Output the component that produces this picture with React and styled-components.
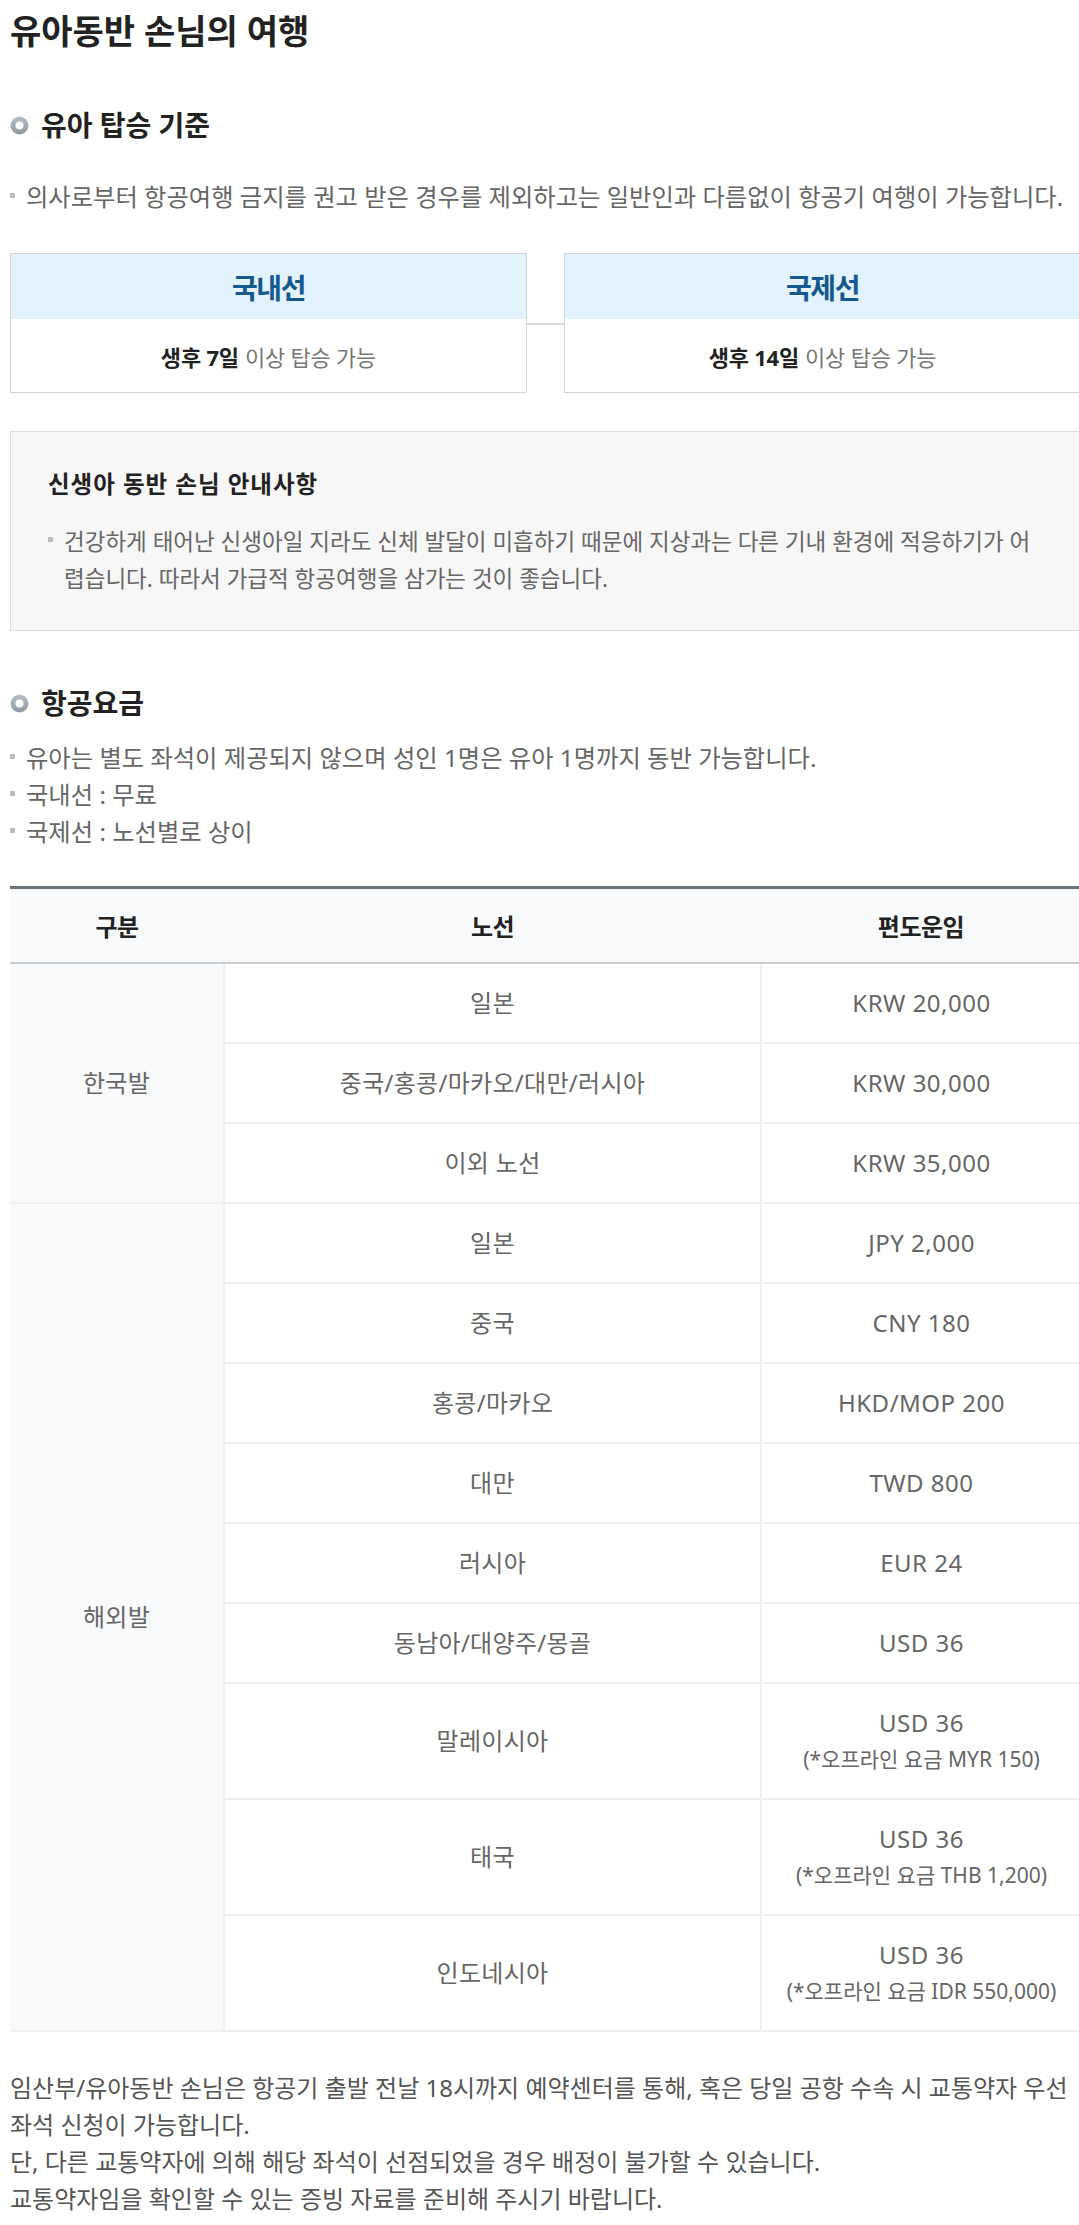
import React from 'react';
import styled, { createGlobalStyle } from 'styled-components';

const GlobalStyle = createGlobalStyle`
  html, body {
    margin: 0;
    padding: 0;
    background: #fff;
    overflow-x: hidden;
  }
  body {
    font-family: "Noto Sans", "Noto Sans CJK KR", sans-serif;
    color: #666;
  }
  * {
    box-sizing: border-box;
  }
`;

const Page = styled.div`
  width: 1081px;
  padding: 8px 0 40px 10px;
`;

const PageTitle = styled.h1`
  margin: 0;
  font-size: 34px;
  line-height: 46px;
  font-weight: 700;
  color: #222;
`;

const SectionTitle = styled.h2`
  display: flex;
  align-items: center;
  gap: 12px;
  margin: ${props => props.$top || 51}px 0 0;
  font-size: 28px;
  line-height: 40px;
  font-weight: 700;
  color: #222;
`;

const BulletList = styled.ul`
  list-style: none;
  margin: ${props => props.$top || 0}px 0 0;
  padding: 0;
`;

const Bullet = styled.li`
  padding-left: 16px;
  text-indent: -16px;
  font-size: ${props => props.$size || 24.3}px;
  line-height: ${props => props.$lh || 36}px;
  color: #666;
  word-break: ${props => (props.$breakAll ? 'break-all' : 'keep-all')};

  &::before {
    content: '';
    display: inline-block;
    width: 5px;
    height: 5px;
    margin-right: 11px;
    vertical-align: middle;
    position: relative;
    top: -4px;
    background: #b9bec3;
  }
`;

const CardRow = styled.div`
  display: grid;
  grid-template-columns: 517px 37px 1fr;
  margin-top: 38px;
`;

const Card = styled.div`
  border: 1px solid #cdd4da;
  background: #fff;
`;

const CardHead = styled.div`
  height: 65px;
  display: flex;
  align-items: center;
  justify-content: center;
  background: #e2f3fd;
  font-size: 28px;
  font-weight: 700;
  letter-spacing: -1.5px;
  color: #15598c;
`;

const CardBody = styled.div`
  height: 73px;
  display: flex;
  align-items: center;
  justify-content: center;
  font-size: 22px;
  color: #777;
  letter-spacing: -0.2px;

  strong {
    color: #222;
    font-weight: 700;
    margin-right: 6px;
  }
`;

const Connector = styled.div`
  align-self: start;
  margin-top: 70px;
  height: 2px;
  background: #d5d9dd;
`;

const Notice = styled.div`
  margin-top: 38px;
  border: 1px solid #dedede;
  background: #f7f7f7;
  padding: 34px 40px 33px 37px;
`;

const NoticeTitle = styled.h3`
  margin: 0 0 21px;
  font-size: 23.5px;
  line-height: 36px;
  font-weight: 700;
  letter-spacing: 1px;
  color: #222;
`;

const Table = styled.table`
  width: 100%;
  margin-top: 36px;
  border-collapse: collapse;
  border-top: 3px solid #69737c;
  border-bottom: 2px solid #c9ced4;
  table-layout: fixed;
`;

const Th = styled.th`
  height: 75px;
  padding: 0;
  background: #f8f9fb;
  border-bottom: 2px solid #c9ced4;
  font-size: 24px;
  font-weight: 700;
  letter-spacing: -0.5px;
  color: #222;
  text-align: center;
`;

const Td = styled.td`
  padding: 21px 8px;
  text-align: center;
  font-size: 24px;
  line-height: 36px;
  letter-spacing: ${props => (props.$last ? '0.5px' : '0.3px')};
  color: #666;
  background: ${props => (props.$group ? '#f8f9fb' : '#fff')};
  border-bottom: 2px solid #eef0f2;
  border-right: ${props => (props.$last ? 'none' : '2px solid #eef0f2')};
`;

const SubNote = styled.div`
  font-size: 21px;
  line-height: 36px;
  letter-spacing: 0;
  color: #666;
`;

const Footer = styled.p`
  margin: 37px -30px 0 0;
  font-size: 24px;
  line-height: 37px;
  color: #555;
  word-break: keep-all;
`;

function RingIcon() {
  return (
    <svg width="19" height="19" viewBox="0 0 19 19" aria-hidden="true">
      <defs>
        <linearGradient id="ring" x1="0" y1="0" x2="0" y2="1">
          <stop offset="0" stopColor="#b7bfc7" />
          <stop offset="1" stopColor="#8f99a3" />
        </linearGradient>
      </defs>
      <circle cx="9.5" cy="9.5" r="9" fill="url(#ring)" />
      <circle cx="9.5" cy="9.5" r="4" fill="#fff" />
    </svg>
  );
}

const korea = [
  { route: '일본', fare: 'KRW 20,000' },
  { route: '중국/홍콩/마카오/대만/러시아', fare: 'KRW 30,000' },
  { route: '이외 노선', fare: 'KRW 35,000' },
];

const overseas = [
  { route: '일본', fare: 'JPY 2,000' },
  { route: '중국', fare: 'CNY 180' },
  { route: '홍콩/마카오', fare: 'HKD/MOP 200' },
  { route: '대만', fare: 'TWD 800' },
  { route: '러시아', fare: 'EUR 24' },
  { route: '동남아/대양주/몽골', fare: 'USD 36' },
  { route: '말레이시아', fare: 'USD 36', note: '(*오프라인 요금 MYR 150)' },
  { route: '태국', fare: 'USD 36', note: '(*오프라인 요금 THB 1,200)' },
  { route: '인도네시아', fare: 'USD 36', note: '(*오프라인 요금 IDR 550,000)' },
];

function FareRows({ label, rows }) {
  return rows.map((row, i) => (
    <tr key={label + i}>
      {i === 0 && (
        <Td $group rowSpan={rows.length}>
          {label}
        </Td>
      )}
      <Td>{row.route}</Td>
      <Td $last>
        {row.fare}
        {row.note && <SubNote>{row.note}</SubNote>}
      </Td>
    </tr>
  ));
}

export default function App() {
  return (
    <>
      <GlobalStyle />
      <Page>
        <PageTitle>유아동반 손님의 여행</PageTitle>

        <SectionTitle>
          <RingIcon />
          유아 탑승 기준
        </SectionTitle>
        <BulletList $top={34}>
          <Bullet>의사로부터 항공여행 금지를 권고 받은 경우를 제외하고는 일반인과 다름없이 항공기 여행이 가능합니다.</Bullet>
        </BulletList>

        <CardRow>
          <Card>
            <CardHead>국내선</CardHead>
            <CardBody>
              <strong>생후 7일</strong>이상 탑승 가능
            </CardBody>
          </Card>
          <Connector />
          <Card>
            <CardHead>국제선</CardHead>
            <CardBody>
              <strong>생후 14일</strong>이상 탑승 가능
            </CardBody>
          </Card>
        </CardRow>

        <Notice>
          <NoticeTitle>신생아 동반 손님 안내사항</NoticeTitle>
          <BulletList>
            <Bullet $size={22.5} $lh={37} $breakAll>
              건강하게 태어난 신생아일 지라도 신체 발달이 미흡하기 때문에 지상과는 다른 기내 환경에 적응하기가 어렵습니다. 따라서 가급적 항공여행을 삼가는 것이 좋습니다.
            </Bullet>
          </BulletList>
        </Notice>

        <SectionTitle $top={52}>
          <RingIcon />
          항공요금
        </SectionTitle>
        <BulletList $top={16}>
          <Bullet $lh={37}>유아는 별도 좌석이 제공되지 않으며 성인 1명은 유아 1명까지 동반 가능합니다.</Bullet>
          <Bullet $lh={37}>국내선 : 무료</Bullet>
          <Bullet $lh={37}>국제선 : 노선별로 상이</Bullet>
        </BulletList>

        <Table>
          <colgroup>
            <col style={{ width: 214 }} />
            <col style={{ width: 537 }} />
            <col />
          </colgroup>
          <thead>
            <tr>
              <Th>구분</Th>
              <Th>노선</Th>
              <Th>편도운임</Th>
            </tr>
          </thead>
          <tbody>
            <FareRows label="한국발" rows={korea} />
            <FareRows label="해외발" rows={overseas} />
          </tbody>
        </Table>

        <Footer>
          임산부/유아동반 손님은 항공기 출발 전날 18시까지 예약센터를 통해, 혹은 당일 공항 수속 시 교통약자 우선 좌석 신청이 가능합니다.
          <br />
          단, 다른 교통약자에 의해 해당 좌석이 선점되었을 경우 배정이 불가할 수 있습니다.
          <br />
          교통약자임을 확인할 수 있는 증빙 자료를 준비해 주시기 바랍니다.
        </Footer>
      </Page>
    </>
  );
}
